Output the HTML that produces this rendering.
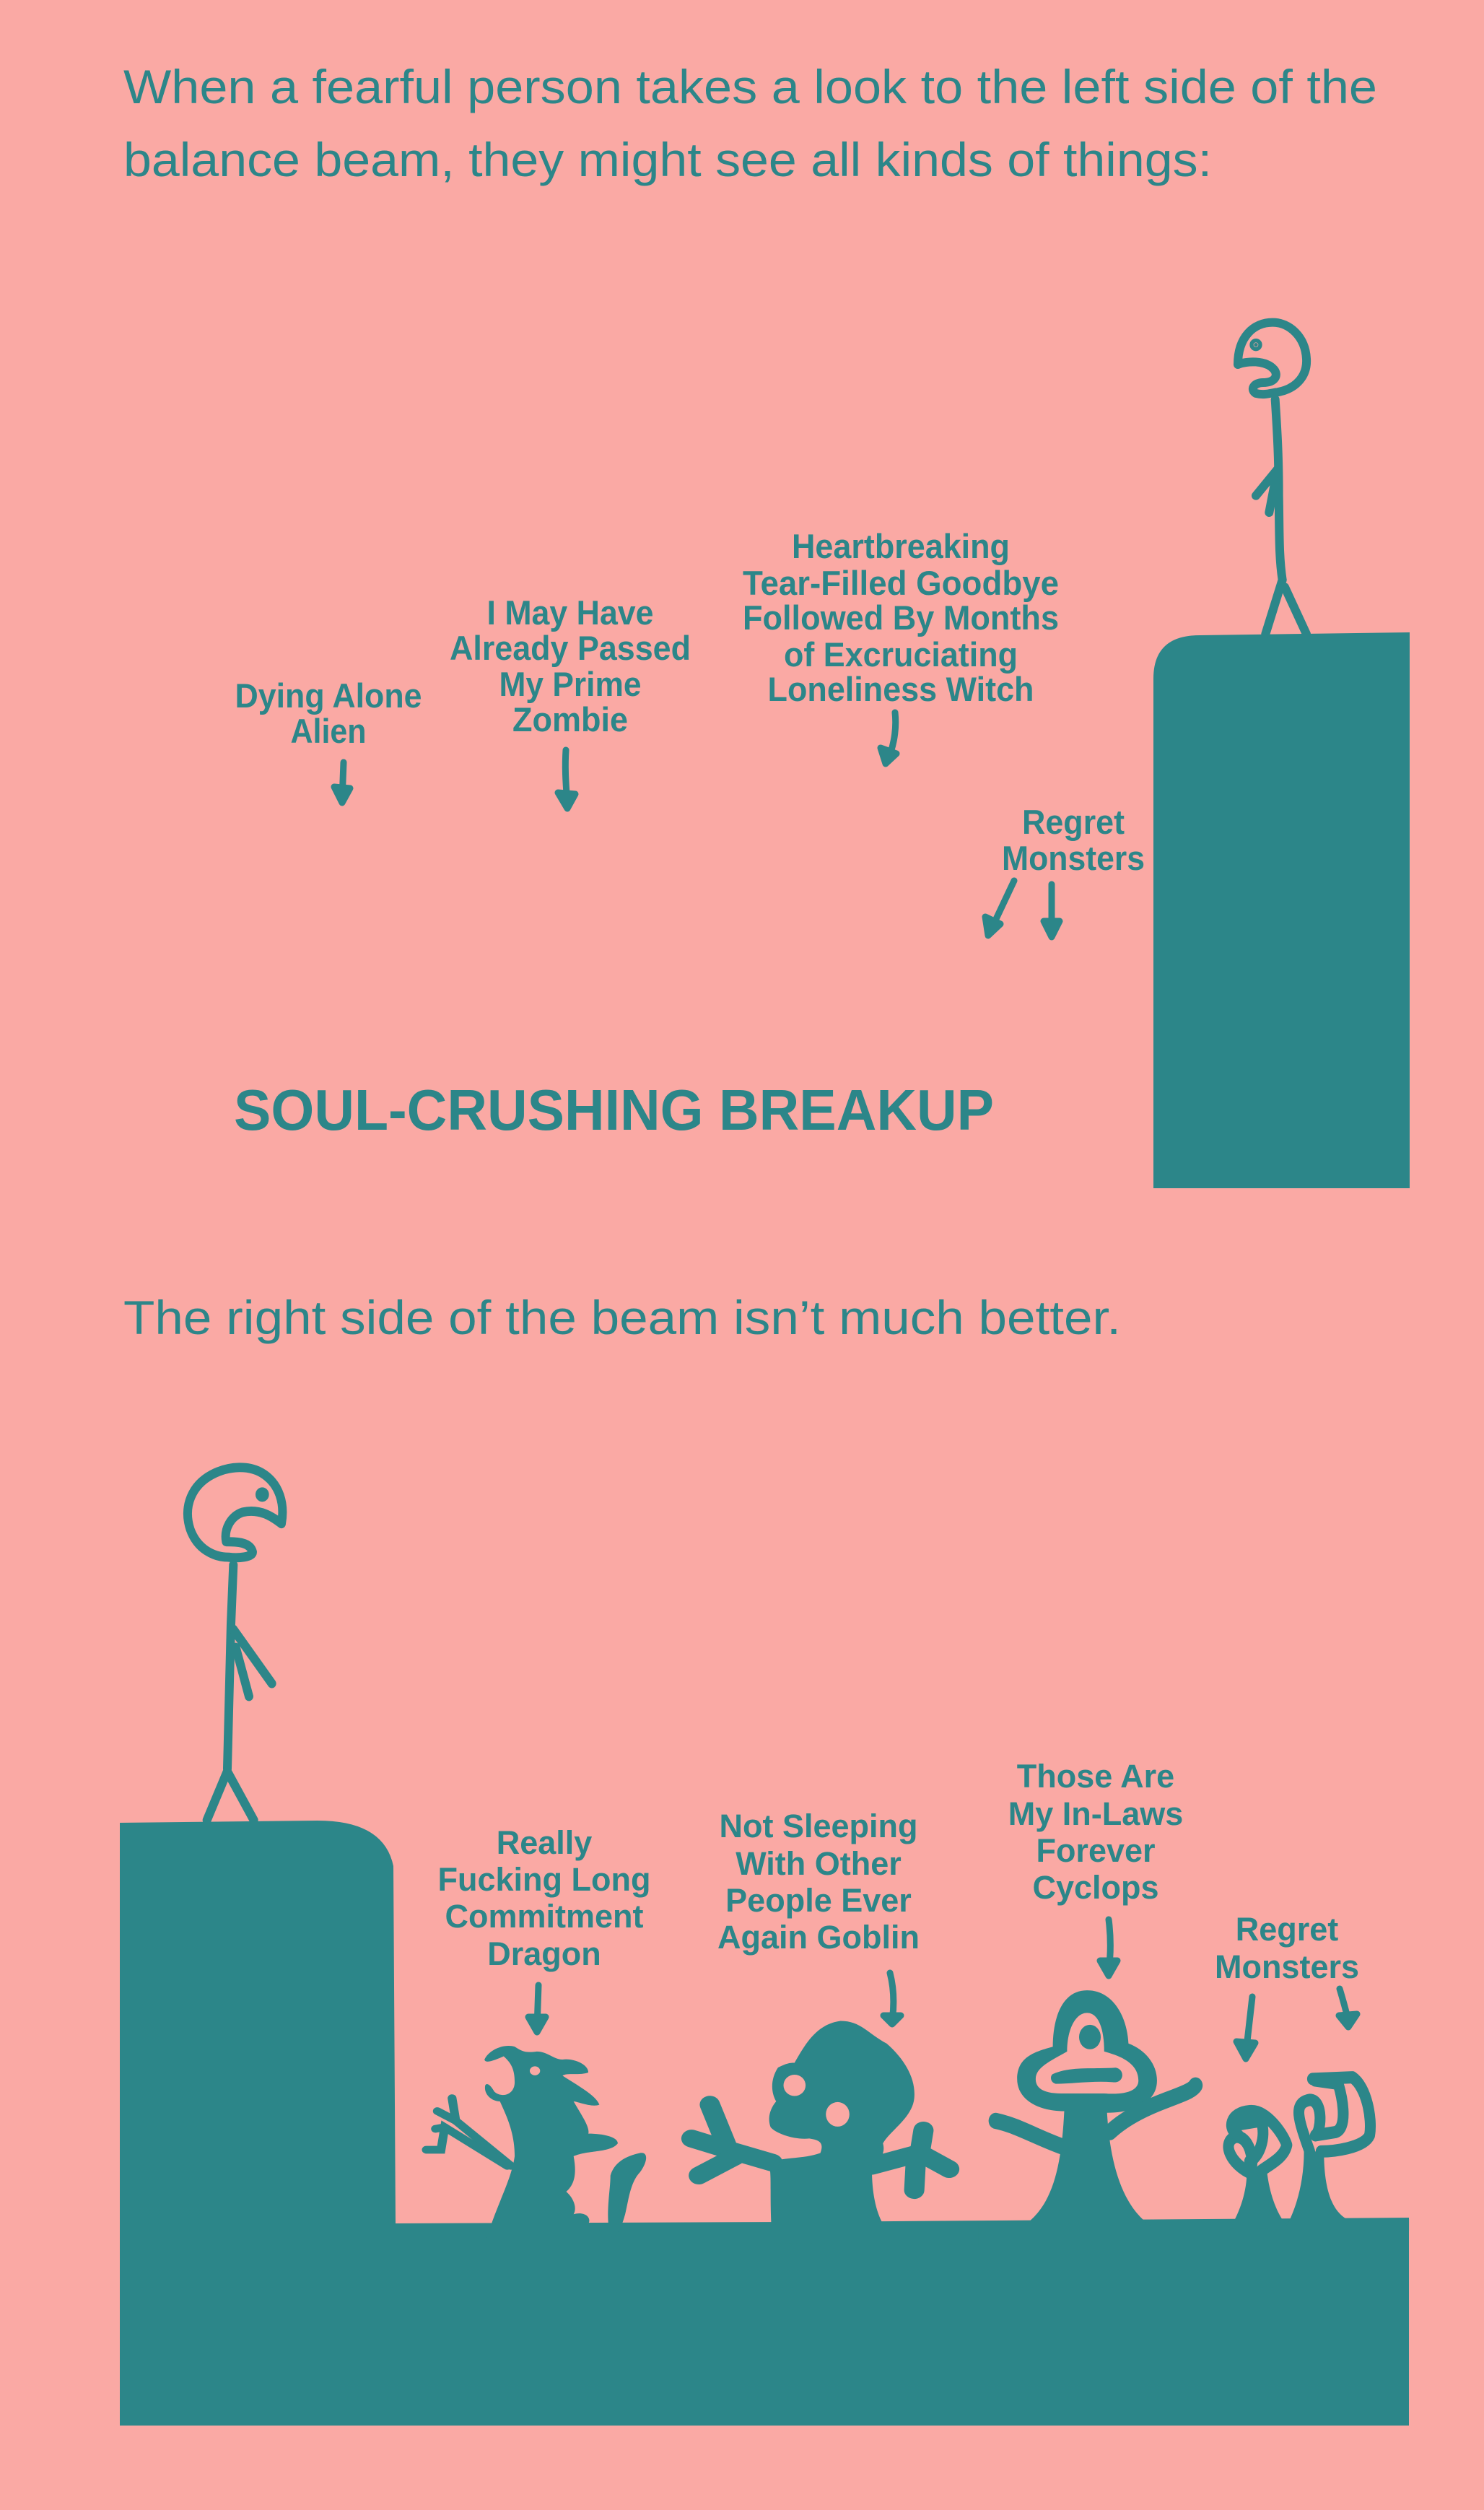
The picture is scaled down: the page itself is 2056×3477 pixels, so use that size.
<!DOCTYPE html>
<html><head><meta charset="utf-8"><style>
html,body{margin:0;padding:0;background:#FAA9A4;}
svg{display:block;}
.p{font-family:"Liberation Sans",sans-serif;font-size:66px;fill:#2C8689;}
.l{font-family:"Liberation Sans",sans-serif;font-weight:bold;font-size:47px;fill:#2C8689;}
.b{font-family:"Liberation Sans",sans-serif;font-weight:bold;font-size:45px;fill:#2C8689;}
</style></head><body>
<svg width="2056" height="3477" viewBox="0 0 2056 3477" xmlns="http://www.w3.org/2000/svg">
<rect width="2056" height="3477" fill="#FAA9A4"/>
<text class="p" x="171" y="143" textLength="1737" lengthAdjust="spacingAndGlyphs">When a fearful person takes a look to the left side of the</text>
<text class="p" x="171" y="244" textLength="1508" lengthAdjust="spacingAndGlyphs">balance beam, they might see all kinds of things:</text>
<text class="p" x="171" y="1848" textLength="1382" lengthAdjust="spacingAndGlyphs">The right side of the beam isn’t much better.</text>

<g class="l" text-anchor="middle">
<text x="455" y="980" textLength="259" lengthAdjust="spacingAndGlyphs">Dying Alone</text>
<text x="455" y="1029" textLength="105" lengthAdjust="spacingAndGlyphs">Alien</text>
<text x="790" y="865" textLength="231" lengthAdjust="spacingAndGlyphs">I May Have</text>
<text x="790" y="914" textLength="334" lengthAdjust="spacingAndGlyphs">Already Passed</text>
<text x="790" y="964" textLength="197" lengthAdjust="spacingAndGlyphs">My Prime</text>
<text x="790" y="1013" textLength="160" lengthAdjust="spacingAndGlyphs">Zombie</text>
<text x="1248" y="773" textLength="302" lengthAdjust="spacingAndGlyphs">Heartbreaking</text>
<text x="1248" y="824" textLength="438" lengthAdjust="spacingAndGlyphs">Tear-Filled Goodbye</text>
<text x="1248" y="872" textLength="438" lengthAdjust="spacingAndGlyphs">Followed By Months</text>
<text x="1248" y="923" textLength="324" lengthAdjust="spacingAndGlyphs">of Excruciating</text>
<text x="1248" y="971" textLength="369" lengthAdjust="spacingAndGlyphs">Loneliness Witch</text>
<text x="1487" y="1155" textLength="142" lengthAdjust="spacingAndGlyphs">Regret</text>
<text x="1487" y="1205" textLength="198" lengthAdjust="spacingAndGlyphs">Monsters</text>
</g>
<text x="324" y="1565" font-family="Liberation Sans, sans-serif" font-weight="bold" font-size="80" fill="#2C8689" textLength="1053" lengthAdjust="spacingAndGlyphs">SOUL-CRUSHING BREAKUP</text>

<g stroke="#2C8689" stroke-width="9" stroke-linecap="round" stroke-linejoin="round" fill="#2C8689">
<path d="M476,1056 L474,1108" fill="none"/><path d="M463,1090 L474,1112 L485,1092 Z"/>
<path d="M784,1039 C782,1070 785,1095 786,1116" fill="none"/><path d="M773,1098 L786,1120 L797,1100 Z"/>
<path d="M1240,987 C1243,1015 1236,1040 1229,1054" fill="none"/><path d="M1220,1036 L1227,1058 L1242,1044 Z"/>
<path d="M1405,1220 L1372,1290" fill="none"/><path d="M1365,1270 L1369,1296 L1386,1280 Z"/>
<path d="M1457,1225 L1457,1293" fill="none"/><path d="M1446,1276 L1457,1298 L1468,1276 Z"/>
</g>

<path d="M1598,1646 L1598,940 Q1598,880 1662,880 L1953,876 L1953,1646 Z" fill="#2C8689"/>
<g transform="translate(1550,420) scale(0.3333)" stroke="#2C8689" stroke-width="36" fill="none" stroke-linecap="round" stroke-linejoin="round">
<path d="M495,255 C530,240 610,235 645,275 C665,300 650,330 600,330 C560,330 545,360 570,375 C610,385 640,370 660,370 C740,355 785,300 780,230 C775,140 710,80 640,80 C560,80 495,140 495,255"/>
<path d="M650,400 C660,550 665,650 665,800 C668,950 665,1050 680,1150"/>
<path d="M680,1150 L610,1375"/><path d="M690,1180 L780,1375"/>
<path d="M660,690 L570,800"/><path d="M650,740 L625,870"/>
<circle cx="570" cy="173" r="8" fill="#2C8689"/>
</g>

<g class="b" text-anchor="middle">
<text x="754" y="2568">Really</text>
<text x="754" y="2619">Fucking Long</text>
<text x="754" y="2670">Commitment</text>
<text x="754" y="2722">Dragon</text>
<text x="1134" y="2545">Not Sleeping</text>
<text x="1134" y="2597">With Other</text>
<text x="1134" y="2648">People Ever</text>
<text x="1134" y="2699">Again Goblin</text>
<text x="1518" y="2476">Those Are</text>
<text x="1518" y="2528">My In-Laws</text>
<text x="1518" y="2579">Forever</text>
<text x="1518" y="2630">Cyclops</text>
<text x="1783" y="2688">Regret</text>
<text x="1783" y="2740">Monsters</text>
</g>
<g stroke="#2C8689" stroke-width="9" stroke-linecap="round" stroke-linejoin="round" fill="#2C8689">
<path d="M746,2750 L744,2810" fill="none"/><path d="M732,2794 L744,2815 L756,2794 Z"/>
<path d="M1233,2733 C1240,2760 1238,2785 1236,2800" fill="none"/><path d="M1224,2792 L1236,2804 L1248,2792 Z"/>
<path d="M1536,2659 C1540,2690 1538,2715 1536,2730" fill="none"/><path d="M1524,2716 L1536,2737 L1548,2716 Z"/>
<path d="M1735,2766 L1726,2845" fill="none"/><path d="M1713,2828 L1726,2852 L1739,2830 Z"/>
<path d="M1856,2755 C1862,2775 1866,2790 1868,2800" fill="none"/><path d="M1855,2792 L1868,2808 L1880,2790 Z"/>
</g>

<path d="M166,3360 L166,2525 L440,2522 Q532,2522 545,2585 L548,3080 L1100,3078 L1952,3072 L1952,3360 Z" fill="#2C8689"/>

<g transform="translate(150,2000) scale(0.3333,0.3571)" stroke="#2C8689" stroke-width="36" fill="none" stroke-linecap="round" stroke-linejoin="round">
<path d="M720,310 C690,290 640,250 560,265 C510,280 480,330 490,380 C530,380 590,380 600,420 C600,440 540,445 500,440 C440,440 370,410 340,330 C310,240 350,160 430,120 C500,85 590,80 650,120 C710,160 735,230 720,310"/>
<path d="M520,470 L510,700 L495,1260"/>
<path d="M495,1270 L410,1460"/><path d="M500,1280 L605,1460"/>
<path d="M520,720 L680,930"/><path d="M530,790 L585,980"/>
<circle cx="640" cy="197" r="10" fill="#2C8689"/>
</g>

<g transform="translate(560,2420) scale(0.5102,0.4464)" fill="#2C8689">
<path d="M220,1540 C250,1420 290,1350 300,1270 C300,1200 280,1150 260,1100 C240,1100 215,1080 220,1050 C225,1040 235,1050 245,1070 C265,1090 300,1080 300,1040 C300,1000 290,980 270,960 C250,970 220,985 218,970 C230,940 270,920 300,930 C320,945 330,950 360,945 C390,945 405,970 430,970 C460,965 500,985 500,1010 C480,1020 440,1010 430,1020 C470,1050 520,1080 530,1110 C510,1120 470,1100 460,1100 C480,1140 505,1180 500,1200 C540,1200 580,1210 580,1230 C560,1260 500,1250 460,1270 C470,1330 460,1360 440,1380 C460,1400 470,1430 460,1450 C490,1440 510,1460 500,1480 C520,1480 540,1500 540,1540 Z"/>
<path d="M560,1520 C545,1450 560,1380 560,1330 C570,1290 600,1270 640,1260 C665,1255 660,1290 640,1320 C615,1350 610,1400 600,1450 C590,1490 580,1520 560,1520 Z"/>
<g stroke="#2C8689" stroke-width="24" fill="none" stroke-linecap="round">
<path d="M290,1300 L140,1160"/><path d="M140,1160 L90,1130"/><path d="M140,1160 L130,1090"/>
<path d="M280,1300 L110,1180 L100,1250 L60,1250"/><path d="M110,1180 L85,1185"/>
</g>
<ellipse cx="355" cy="1005" rx="14" ry="14" fill="#FAA9A4"/>
<path d="M1000,1540 C990,1400 1000,1330 990,1290 C1040,1270 1080,1280 1130,1260 C1140,1230 1130,1220 1100,1215 C1060,1220 1010,1200 995,1180 C985,1150 995,1120 1010,1100 C995,1070 995,1030 1015,995 C1040,980 1050,980 1060,980 C1090,920 1120,860 1185,850 C1240,850 1260,890 1310,920 C1360,970 1390,1030 1385,1090 C1380,1150 1320,1190 1300,1230 C1310,1270 1280,1290 1270,1310 C1270,1380 1280,1440 1300,1480 L1560,1476 L1560,1545 Z"/>
<ellipse cx="1060" cy="1050" rx="30" ry="33" fill="#FAA9A4"/>
<ellipse cx="1177" cy="1140" rx="32" ry="38" fill="#FAA9A4"/>
<g stroke="#2C8689" stroke-width="55" fill="none" stroke-linecap="round" stroke-linejoin="round">
<path d="M1000,1290 L880,1250 L830,1110"/><path d="M880,1250 L780,1215"/><path d="M900,1270 L800,1330"/>
<path d="M1270,1300 L1400,1260 L1410,1190"/><path d="M1400,1260 L1480,1310"/><path d="M1390,1270 L1385,1375"/>
</g>
</g>

<g transform="translate(1340,2400) scale(0.3954,0.4464)" fill="#2C8689">
<path d="M180,1540 C300,1480 330,1350 340,1175 C250,1175 175,1140 175,1075 C175,1005 240,990 300,975 C300,890 330,800 420,800 C510,800 560,880 565,965 C625,985 665,1030 665,1080 C665,1150 580,1180 490,1180 C500,1330 540,1480 660,1540 Z"/>
<path d="M350,990 C350,920 380,870 420,870 C460,870 480,920 480,990 C520,1000 600,1020 600,1080 C600,1110 560,1125 480,1120 L330,1120 C260,1120 240,1100 240,1075 C240,1040 290,1020 350,990 Z" fill="#FAA9A4"/>
<circle cx="430" cy="945" r="38"/>
<path d="M300,1060 C360,1035 440,1045 520,1040 C555,1045 550,1090 510,1085 C440,1080 370,1090 310,1090 C290,1085 290,1065 300,1060 Z"/>
<g stroke="#2C8689" stroke-width="50" fill="none" stroke-linecap="round">
<path d="M350,1290 C250,1260 180,1220 100,1205"/>
<path d="M500,1240 C560,1190 640,1160 700,1140 C760,1120 790,1110 800,1095"/>
</g>
<path d="M920,1540 C960,1480 980,1420 980,1360 L1050,1360 C1060,1440 1090,1500 1120,1530 C1150,1480 1180,1400 1180,1300 L1250,1300 C1250,1400 1270,1480 1330,1510 L1548,1510 L1548,1545 Z"/>
<g stroke="#2C8689" stroke-width="38" fill="none" stroke-linecap="round" stroke-linejoin="round">
<path d="M1000,1370 C920,1340 890,1270 940,1255 C990,1250 1005,1330 995,1350"/>
<path d="M950,1250 C910,1230 920,1180 990,1175 C1050,1170 1110,1250 1120,1280 C1110,1320 1060,1340 1030,1360"/>
<path d="M960,1215 L1030,1205 C1050,1260 1020,1320 990,1330"/>
<path d="M1200,1300 C1160,1200 1140,1150 1200,1140 C1250,1140 1240,1240 1220,1250 L1290,1240 C1330,1230 1320,1150 1300,1090 L1220,1080"/>
<path d="M1210,1075 L1350,1070 C1400,1100 1420,1200 1410,1250 C1390,1290 1280,1300 1240,1300"/>
</g>
</g>
</svg>
</body></html>
